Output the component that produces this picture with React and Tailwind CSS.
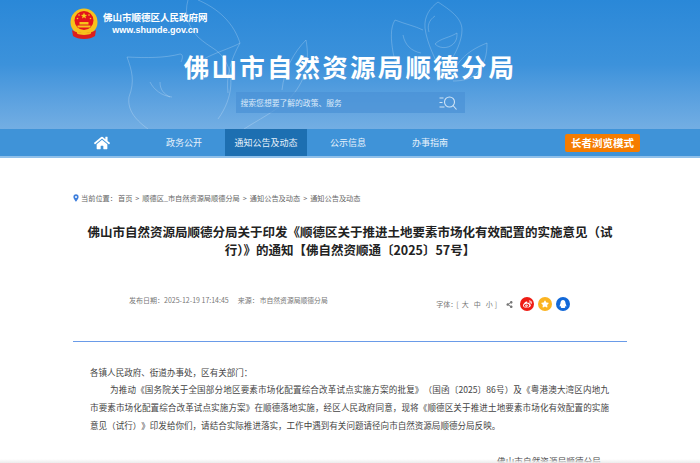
import { FaHome, FaWeibo, FaStar, FaQq, FaShareAlt } from "react-icons/fa";

const font = { fontFamily: '"Noto Sans CJK SC", "Liberation Sans", sans-serif' };

function Emblem() {
  return (
    <svg width="30" height="32" viewBox="0 0 30 32" className="shrink-0">
      <circle cx="15" cy="14" r="13.5" fill="#f7c21c" />
      <circle cx="15" cy="12.5" r="9.5" fill="#e3141c" />
      <path d="M15 4.5l.9 2.2 2.3.2-1.8 1.4.6 2.3-2-1.3-2 1.3.6-2.3-1.8-1.4 2.3-.2z" fill="#f7d21c" />
      <circle cx="10" cy="7" r=".8" fill="#f7d21c" />
      <circle cx="20" cy="7" r=".8" fill="#f7d21c" />
      <circle cx="8.5" cy="10.5" r=".8" fill="#f7d21c" />
      <circle cx="21.5" cy="10.5" r=".8" fill="#f7d21c" />
      <path d="M8.5 17.5h13v2h-13z M10.5 14h9v2.5h-9z" fill="#f7c21c" />
      <path d="M3 22c3 2 6 3 12 3s9-1 12-3l-1 6c-3 2-6 3-11 3s-8-1-11-3z" fill="#dd1f1c" />
      <path d="M8 23.5c2 1 4 1.4 7 1.4s5-.4 7-1.4v2c-2 1-4 1.4-7 1.4s-5-.4-7-1.4z" fill="#f7c21c" />
    </svg>
  );
}

function Leaves() {
  return (
    <svg className="absolute inset-0" width="700" height="129" viewBox="0 0 700 129" fill="none" stroke="#ffffff" strokeOpacity="0.22" strokeWidth="1">
      <path d="M127 57c20 1 38 1 53-3 3 0 3 4 1 8" />
      <path d="M127 57c5 14 8 24 2 40-2 14 8 24 19 32" />
      <path d="M150 82c4 8 12 14 22 15" />
      <path d="M160 82c0 8 4 12 10 15" />
      <path d="M188 0c-4 14 0 26 10 37 12 11 20 12 26 22 10 14 10 38-6 60" />
      <path d="M198 0c14 6 34 18 42 43-6 4-26 10-36 16" />
      <path d="M240 43c-10 18-14 34-12 50" />
      <path d="M306 40c4 22 0 42-18 60-14 12-30 20-44 29" />
      <path d="M306 40c-12 12-22 30-24 50" />
      <path d="M395 20c10 4 20 6 28 10" />
      <path d="M395 20c-5 8-4 20-2 32 2 10 4 14 8 20" />
      <path d="M403 35c2 10 8 16 18 18" />
      <path d="M438 2c-8 6-14 14-13 26 2 16 10 30 18 48" />
      <path d="M438 2c12 8 24 16 24 28 0 10-6 24-14 34" />
      <path d="M435 16c-6 4-8 10-6 16" />
      <path d="M457 33c-8 5-16 5-22 11 6 6 16 4 20-2 2-3 2-6 2-9z" />
      <path d="M487 43c-10 4-22 10-30 22-6 8-10 12-20 16" />
      <path d="M487 43c0 12-2 20-10 30-6 6-14 8-24 8" />
    </svg>
  );
}

function SearchIcon() {
  return (
    <svg width="18" height="14" viewBox="0 0 18 14" fill="none" stroke="#cfe3f6" strokeWidth="1.1" className="shrink-0">
      <path d="M0.5 2h4M0.5 6.5h3M0.5 11h5" />
      <circle cx="10.5" cy="6" r="5" />
      <path d="M14 9.5l3.5 4" />
    </svg>
  );
}

function Header() {
  return (
    <header className="relative h-[129px] overflow-hidden bg-gradient-to-b from-[#2a88d8] via-[#3c92db] to-[#73aee3]">
      <Leaves />
      <div className="relative flex flex-col">
        <div className="flex items-center pl-[69px] pt-[8px]">
          <Emblem />
          <div className="ml-[4px] flex flex-col items-center text-white font-bold">
            <span className="text-[9.5px] leading-[13px]">佛山市顺德区人民政府网</span>
            <span className="text-[9px] leading-[13px] font-['Liberation_Sans']">www.shunde.gov.cn</span>
          </div>
        </div>
        <h1 className="mt-[7px] text-center text-[25.5px] leading-[38px] font-bold tracking-[2.2px] text-white">
          佛山市自然资源局顺德分局
        </h1>
        <div className="mx-auto mt-[7px] flex h-[21px] w-[229px] items-center justify-between bg-[#4a91d6]/70 pl-[5px] pr-[8px]">
          <span className="text-[7.8px] text-[#dbeafa]">搜索您想要了解的政策、服务</span>
          <SearchIcon />
        </div>
      </div>
    </header>
  );
}

function Nav() {
  const items = ["政务公开", "通知公告及动态", "公示信息", "办事指南"];
  return (
    <nav className="flex h-[29px] items-center border-b-2 border-[#8fc0ea] bg-[#3f93d8] pl-[61px]">
      <div className="flex h-full w-[82px] items-center justify-center text-white">
        <FaHome size={16} />
      </div>
      {items.map((item) => (
        <div
          key={item}
          className={
            item === "通知公告及动态"
              ? "flex h-full w-[82px] items-center justify-center bg-[#1d6fb1] text-[9px] text-[#e6f1fb]"
              : "flex h-full w-[82px] items-center justify-center text-[9px] text-[#e6f1fb]"
          }
        >
          {item}
        </div>
      ))}
      <button className="ml-[94px] flex h-[18px] w-[75px] items-center justify-center rounded-[2px] bg-[#f57c00] text-[10.5px] font-bold text-white">
        长者浏览模式
      </button>
    </nav>
  );
}

function Breadcrumb() {
  return (
    <div className="flex h-[10px] items-center pl-[73px] text-[7.2px] text-[#666666] whitespace-nowrap">
      <svg width="6" height="8" viewBox="0 0 6 8" className="mr-[2px]">
        <path d="M3 .3a2.6 2.6 0 0 0-2.6 2.6C.4 4.6 3 7.7 3 7.7s2.6-3.1 2.6-4.8A2.6 2.6 0 0 0 3 .3z" fill="#3f7fdc" />
        <circle cx="3" cy="2.9" r="1" fill="#fff" />
      </svg>
      <span>当前位置：</span>
      <span className="ml-[1px]">首页</span>
      <span className="mx-[3px]">&gt;</span>
      <span>顺德区_市自然资源局顺德分局</span>
      <span className="mx-[3px]">&gt;</span>
      <span>通知公告及动态</span>
      <span className="mx-[3px]">&gt;</span>
      <span>通知公告及动态</span>
    </div>
  );
}

function ShareCircle({ bg, children }) {
  return (
    <span className={"flex h-[14px] w-[14px] items-center justify-center rounded-full text-white " + bg}>
      {children}
    </span>
  );
}

function Meta() {
  return (
    <div className="mt-[36px] flex items-center pl-[129px] pr-[130px] text-[7px] text-[#777777] whitespace-nowrap">
      <span className="mb-[8px]">发布日期：2025-12-19 17:14:45</span>
      <span className="mb-[8px] ml-[9px]">来源：</span>
      <span className="mb-[8px] ml-[1px] text-[6.8px]">市自然资源局顺德分局</span>
      <div className="ml-auto flex items-center">
        <span>字体：</span>
        <span className="ml-[-1px]">[</span>
        <span className="ml-[3px]">大</span>
        <span className="ml-[5px]">中</span>
        <span className="ml-[5px]">小</span>
        <span className="ml-[2px]">]</span>
        <FaShareAlt size={7} className="ml-[9px] mr-[7px] text-[#777777]" />
        <div className="flex gap-[4px]">
          <ShareCircle bg="bg-[#ee1c14]"><FaWeibo size={9} /></ShareCircle>
          <ShareCircle bg="bg-[#fbb422]"><FaStar size={8} /></ShareCircle>
          <ShareCircle bg="bg-[#1268d8]"><FaQq size={8} /></ShareCircle>
        </div>
      </div>
    </div>
  );
}

export default function App() {
  return (
    <div className="relative h-[463px] w-[700px] overflow-hidden bg-white [text-spacing-trim:space-all]" style={font}>
      <Header />
      <Nav />
      <main className="pt-[35px]">
        <Breadcrumb />
        <h2 className="mx-auto mt-[20px] w-[530px] text-center text-[12.5px] leading-[18px] font-bold text-[#222222] [text-spacing-trim:normal]">
          佛山市自然资源局顺德分局关于印发《顺德区关于推进土地要素市场化有效配置的实施意见（试行）》的通知【佛自然资顺通〔2025〕57号】
        </h2>
        <Meta />
        <div className="mx-[73px] mt-[27px] border-t border-[#6a9be8]" />
        <div className="pl-[90px] pr-[91px] pt-[22px] text-[8.55px] leading-[17.8px] text-[#444444]">
          <p>各镇人民政府、街道办事处，区有关部门：</p>
          <p className="indent-[20px] [text-align-last:justify]">
            为推动《国务院关于全国部分地区要素市场化配置综合改革试点实施方案的批复》（国函〔2025〕86号）及《粤港澳大湾区内地九
          </p>
          <p className="[text-align-last:justify]">
            市要素市场化配置综合改革试点实施方案》在顺德落地实施，经区人民政府同意，现将《顺德区关于推进土地要素市场化有效配置的实施
          </p>
          <p>
            意见（试行）》印发给你们，请结合实际推进落实，工作中遇到有关问题请径向市自然资源局顺德分局反映。
          </p>
          <p className="mt-[18px] pl-[407px] whitespace-nowrap tracking-[0.12px]">佛山市自然资源局顺德分局</p>
        </div>
      </main>
      <div className="absolute bottom-0 left-0 h-[4px] w-full bg-gradient-to-b from-transparent to-[#ececec]" />
    </div>
  );
}
